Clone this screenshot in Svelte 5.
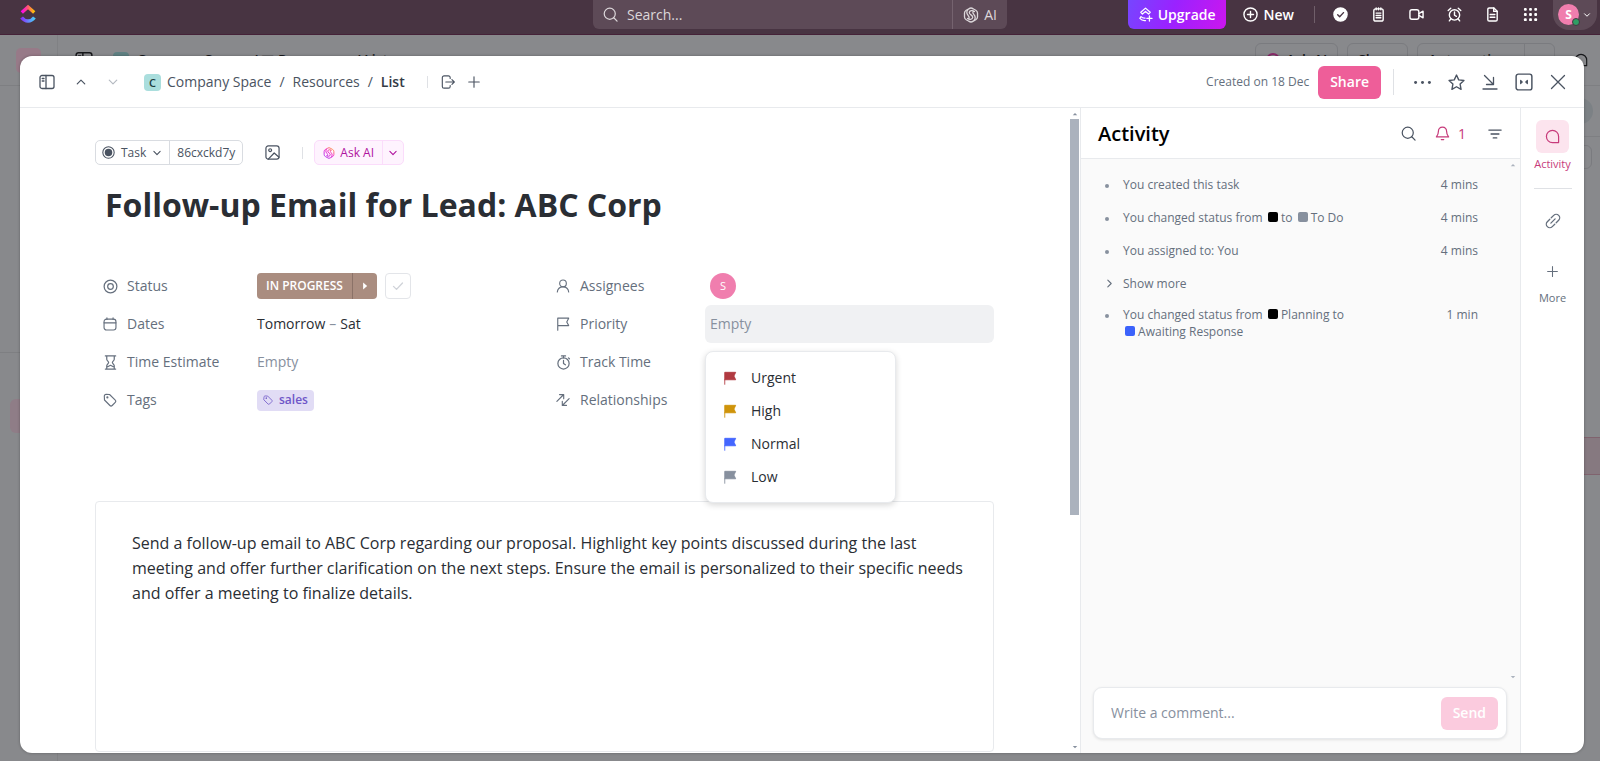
<script>
  // Icon bodies, all drawn on a 16x16 grid
  const icons = {
    search: '<circle cx="7.2" cy="7.2" r="5.9"/><path d="M11.5 11.5 15 15"/>',
    ai: '<path d="M8 1c1 0 1.700.5 2.500 1l2.300 1.300c1.200.7 1.700 1.400 1.700 2.700v4c0 1.300-.5 2-1.700 2.700L10.500 14c-.8.500-1.500 1-2.500 1s-1.700-.5-2.500-1l-2.300-1.300C2 12 1.500 11.300 1.500 10V6c0-1.300.5-2 1.700-2.700L5.500 2C6.300 1.500 7 1 8 1Z"/><path d="M11.500 4.500C9.500 3 6.500 3.600 6.300 5.400 6 7.800 10 8 9.700 10.500 9.400 12.400 6.500 13 4.500 11.500M5 2.500C3.500 4 3.300 6.500 5 8.200c1.200 1.200 1.600 2.300.8 3.600M11 13.500c1.500-1.500 1.700-4 0-5.700-1.200-1.200-1.600-2.300-.8-3.600"/>',
    upgrade: '<path d="M8 1.200 13 5.600 11.300 7.500 8 4.800 4.700 7.500 3 5.600Z"/><path d="M3.200 10.300c1.200 1.200 2.600 1.600 4.300 1.500M3.200 10.300 2 12.200c1.500 1.800 3.600 2.600 6 2.300M12.200 9.500v5.400M9.500 12.200h5.400"/>',
    plusCircle: '<circle cx="8" cy="8" r="7"/><path d="M8 4.800v6.400M4.800 8h6.400"/>',
    checkCircle: '<circle cx="8" cy="8" r="7" fill="currentColor"/><path d="m5 8.300 2.100 2.100L11.200 6" stroke="#483442"/>',
    notepad: '<rect x="3" y="2" width="10" height="13" rx="2"/><path d="M5.500 1v2M8 1v2M10.500 1v2M5.500 6.500h5M5.500 9h5M5.500 11.500h5"/>',
    video: '<rect x="1" y="3" width="9.500" height="10" rx="2.200"/><path d="M10.500 7 15 4.500v7L10.500 9"/>',
    alarm: '<circle cx="8" cy="8.500" r="5.500"/><path d="M8 5.300v3.500l2 1.200M1.300 3.800 4 1.400M14.700 3.800 12 1.400M4 12.800l-1.500 2M12 12.800l1.500 2"/>',
    doc: '<path d="M3 2.500C3 1.600 3.600 1 4.500 1H9.500L13 4.500v9c0 .9-.6 1.500-1.500 1.500h-7C3.600 15 3 14.400 3 13.500Z"/><path d="M9.300 1v3.700H13M5.500 8h5M5.500 11h5"/>',
    grid: '<g fill="currentColor" stroke="none"><rect x="1" y="1" width="3" height="3" rx="1"/><rect x="6.500" y="1" width="3" height="3" rx="1"/><rect x="12" y="1" width="3" height="3" rx="1"/><rect x="1" y="6.500" width="3" height="3" rx="1"/><rect x="6.500" y="6.500" width="3" height="3" rx="1"/><rect x="12" y="6.500" width="3" height="3" rx="1"/><rect x="1" y="12" width="3" height="3" rx="1"/><rect x="6.500" y="12" width="3" height="3" rx="1"/><rect x="12" y="12" width="3" height="3" rx="1"/></g>',
    sidebar: '<rect x="1" y="1.500" width="14" height="13" rx="2"/><path d="M7 1.500v13M3.200 4.500h1.800M3.200 7h1.800"/>',
    up: '<path d="m3 10.500 5-5 5 5"/>',
    down: '<path d="m3 5.500 5 5 5-5"/>',
    right: '<path d="m5 2 6 6-6 6"/>',
    exit: '<path d="M10.500 4V3a2 2 0 0 0-2-2H3.500a2 2 0 0 0-2 2v10a2 2 0 0 0 2 2h5a2 2 0 0 0 2-2v-1M5.500 8H15M12.500 5.300 15.200 8l-2.700 2.700"/>',
    plus: '<path d="M8 2v12M2 8h12"/>',
    dots: '<g fill="currentColor" stroke="none"><circle cx="1.500" cy="8" r="1.400"/><circle cx="8" cy="8" r="1.400"/><circle cx="14.500" cy="8" r="1.400"/></g>',
    star: '<path d="m8 1 2.100 4.500 4.900.6-3.600 3.400.9 4.900L8 12l-4.300 2.400.9-4.900L1 6.100l4.900-.6Z"/>',
    minimize: '<path d="M2.500 1.500l9 9M11.500 3.500v7h-7M1 15h14"/>',
    collapse: '<rect x="1" y="1" width="14" height="14" rx="2"/><path d="m5 6.600 1.400 1.400L5 9.400ZM11 6.600 9.600 8 11 9.400Z" fill="currentColor" stroke-width="1"/>',
    close: '<path d="m1.500 1.500 13 13M14.500 1.500l-13 13"/>',
    taskType: '<circle cx="8" cy="8" r="7"/><circle cx="8" cy="8" r="4.600" fill="currentColor" stroke="none"/>',
    image: '<rect x="1" y="1" width="14" height="14" rx="2.500"/><circle cx="5.500" cy="5.500" r="1.500"/><path d="m3.500 15 6.300-6.500L15 13"/>',
    status: '<circle cx="8" cy="8" r="6.800"/><circle cx="8" cy="8" r="3"/>',
    calendar: '<rect x="1.200" y="2.500" width="13.600" height="12.300" rx="2.800"/><path d="M1.200 6.700h13.600M4.500.8v2M11.500.8v2"/>',
    hourglass: '<path d="M2.500 1h11M2.500 15h11M4 1v3.500C4 6 6 7 6 8s-2 2-2 3.500V15M12 1v3.500C12 6 10 7 10 8s2 2 2 3.500V15M5 12.500 8 11l3 1.500"/>',
    tag: '<path d="M1.500 3.500c0-1 .8-2 2-2l4 .2 6.500 6.500c.8.800.8 1.800 0 2.600L10.500 14.300c-.8.800-1.800.8-2.600 0L1.700 8Z"/><circle cx="5" cy="5" r=".6"/>',
    person: '<circle cx="8" cy="5" r="3.800"/><path d="M1.500 14.800c.4-3.500 3-5.800 6.500-5.800s6.100 2.300 6.500 5.800"/>',
    flag: '<path d="M2 15V1.300h12.500L12.300 5.600l2.200 4.200H2"/>',
    flagFull: '<path d="M2 15.200V1.500h12.500L12.500 5.800l2 4.200H2" fill="currentColor"/>',
    timer: '<circle cx="8" cy="9" r="6"/><path d="M5.800 1h4.400M8 1v2M8 5.800V9l2 1.500M13.300 3l1 1"/>',
    relations: '<path d="M1 9.500 8.500 2M4 1.800h4.800v4.800M15 6.500 7.500 14M12 14.200H7.200V9.400"/>',
    play: '<path d="M5 2.500 11.500 8 5 13.500Z" fill="currentColor" stroke="none"/>',
    check: '<path d="m2 8.500 4 4 8-8.500"/>',
    bell: '<path d="M8 1.200c-2.800 0-4.400 2-4.400 4.600 0 3.200-1.100 4.500-2.100 5.900h13c-1-1.400-2.100-2.700-2.100-5.900 0-2.600-1.600-4.600-4.400-4.600Z"/><path d="M6.700 14.500h2.600"/>',
    filter: '<path d="M1 3.500h14M3.500 8h9M6 12.500h4"/>',
    chat: '<path d="M14.500 14.500V8A6.500 6.500 0 1 0 8 14.500Z"/>',
    link: '<g transform="rotate(-45 8 8)"><path d="M7 4.500H3.500a3.500 3.500 0 0 0 0 7H7M9 4.500h3.500a3.500 3.500 0 0 1 0 7H9M5 8h6"/></g>',
    caretUp: '<path d="M2 11 8 5l6 6Z" fill="currentColor" stroke="none"/>',
    caretDown: '<path d="M2 5l6 6 6-6Z" fill="currentColor" stroke="none"/>'
  };

  const quickActions = [
    ['checkCircle', 'Tasks'],
    ['notepad', 'Notepad'],
    ['video', 'Record clip'],
    ['alarm', 'Reminder'],
    ['doc', 'New doc'],
    ['grid', 'Apps']
  ];

  const priorities = [
    { name: 'Urgent', color: '#b13a41' },
    { name: 'High', color: '#cf940a' },
    { name: 'Normal', color: '#4466ff' },
    { name: 'Low', color: '#87909e' }
  ];

  let priority = null;
  let comment = '';
  let query = '';
</script>

{#snippet icon(name, size = 16, stroke = 1.3)}
  <svg
    width={size}
    height={size}
    viewBox="0 0 16 16"
    fill="none"
    stroke="currentColor"
    stroke-width={stroke}
    stroke-linecap="round"
    stroke-linejoin="round"
    aria-hidden="true">{@html icons[name]}</svg>
{/snippet}

<div class="app">
  <header class="topbar">
    <a class="logo" href="#home" aria-label="Home">
      <svg width="16" height="20" viewBox="0 0 16 20" fill="none" stroke-width="3.400">
        <defs>
          <linearGradient id="logoTop" x1="0" x2="1">
            <stop offset="0" stop-color="#ff02f0" />
            <stop offset="0.500" stop-color="#ff5a6e" />
            <stop offset="1" stop-color="#ffc800" />
          </linearGradient>
          <linearGradient id="logoBottom" x1="0" x2="1">
            <stop offset="0" stop-color="#8930fd" />
            <stop offset="1" stop-color="#49ccf9" />
          </linearGradient>
        </defs>
        <path d="M1.800 8.500 8 3l6.200 5.500" stroke="url(#logoTop)" />
        <path d="M1.600 13.500c3.400 4.600 9.400 4.600 12.800 0" stroke="url(#logoBottom)" />
      </svg>
    </a>

    <div class="search">
      <label class="search-field">
        {@render icon('search', 15)}
        <input type="text" placeholder="Search..." aria-label="Search" bind:value={query} />
      </label>
      <button class="search-ai">{@render icon('ai', 16)}AI</button>
    </div>

    <div class="actions">
      <button class="upgrade">{@render icon('upgrade', 15, 1.4)}Upgrade</button>
      <button class="new">{@render icon('plusCircle', 15, 1.5)}New</button>
      <span class="bar-divider"></span>
      <div class="quick">
        {#each quickActions as [name, label]}
          <button aria-label={label}>{@render icon(name, 15, 1.5)}</button>
        {/each}
      </div>
      <button class="profile" aria-label="Profile">
        <span class="avatar small">S<i class="online"></i></span>
        {@render icon('down', 8, 2)}
      </button>
    </div>
  </header>

  <!-- Page behind the task dialog -->
  <div class="page" aria-hidden="true" inert>
    <div class="page-side">
      <div class="page-workspace"><span></span></div>
      <div class="page-nav"></div>
      <div class="page-pinned"></div>
    </div>
    <div class="page-main">
      <div class="page-head">
        {@render icon('sidebar', 18)}
        <span class="page-badge"></span>
        <span class="page-crumb">Company Space</span>
        <span class="page-crumb">/ &#9638; Resources</span>
        <span class="page-crumb">/ List</span>
        <span class="page-tools">
          <span class="page-btn"><i></i>Ask AI</span>
          <span class="page-btn">Share</span>
          <span class="page-btn wide">Automations<b></b></span>
          {@render icon('chat', 14)}
        </span>
      </div>
      <div class="page-views"><span></span></div>
      <div class="page-filters"><span></span></div>
      <div class="page-band"></div>
    </div>
  </div>

  <div class="modal" role="dialog" aria-label="Task">
    <header class="modal-head">
      <button aria-label="Toggle sidebar">{@render icon('sidebar', 16)}</button>
      <button class="step" aria-label="Previous task">{@render icon('up', 12, 1.6)}</button>
      <button class="step next" aria-label="Next task">{@render icon('down', 12, 1.6)}</button>
      <nav class="crumbs">
        <span class="space-badge">C</span>
        <a href="#space">Company Space</a>
        <span>/</span>
        <a href="#resources">Resources</a>
        <span>/</span>
        <a class="current" href="#list">List</a>
      </nav>
      <span class="divider crumb-divider"></span>
      <button aria-label="Move">{@render icon('exit', 14)}</button>
      <button class="add" aria-label="Add">{@render icon('plus', 14)}</button>

      <div class="head-right">
        <span class="created">Created on 18 Dec</span>
        <button class="share">Share</button>
        <span class="divider tall"></span>
        <div class="window-tools">
          <button aria-label="More">{@render icon('dots', 17)}</button>
          <button aria-label="Favorite">{@render icon('star', 17)}</button>
          <button aria-label="Minimize">{@render icon('minimize', 16)}</button>
          <button aria-label="Collapse">{@render icon('collapse', 18)}</button>
          <button aria-label="Close">{@render icon('close', 16)}</button>
        </div>
      </div>
    </header>

    <div class="modal-body">
      <section class="task">
        <div class="task-content">
          <div class="toolbar">
            <div class="group">
              <button>{@render icon('taskType', 13)}Task{@render icon('down', 10, 1.8)}</button>
              <button>86cxckd7y</button>
            </div>
            <button class="cover" aria-label="Add cover">{@render icon('image', 15)}</button>
            <span class="divider"></span>
            <div class="group ask">
              <button>
                <svg width="12" height="12" viewBox="0 0 16 16" fill="none" stroke="url(#aiFill)" stroke-width="1.200">
                  <defs>
                    <linearGradient id="aiFill" gradientUnits="userSpaceOnUse" x1="2" y1="14" x2="12" y2="2">
                      <stop offset="0" stop-color="#a020f0" />
                      <stop offset="0.600" stop-color="#f01fc4" />
                      <stop offset="1" stop-color="#ff8a3c" />
                    </linearGradient>
                  </defs>
                  {@html icons.ai}
                </svg>
                Ask AI
              </button>
              <button class="ask-more" aria-label="AI options">{@render icon('down', 10, 1.8)}</button>
            </div>
          </div>

          <h1>Follow-up Email for Lead: ABC Corp</h1>

          <div class="fields">
            <div class="field">
              <span class="name">{@render icon('status', 15)}Status</span>
              <div class="value">
                <div class="status">
                  <button>IN PROGRESS</button>
                  <button class="status-next" aria-label="Next status">{@render icon('play', 10)}</button>
                </div>
                <button class="complete" aria-label="Mark complete">{@render icon('check', 12, 1.8)}</button>
              </div>
            </div>
            <div class="field">
              <span class="name">{@render icon('person', 14)}Assignees</span>
              <div class="value"><span class="avatar">S</span></div>
            </div>
            <div class="field">
              <span class="name">{@render icon('calendar', 14)}Dates</span>
              <div class="value dates">Tomorrow <span>–</span> Sat</div>
            </div>
            <div class="field">
              <span class="name">{@render icon('flag', 14)}Priority</span>
              <button class="value active" class:empty={!priority} aria-haspopup="menu" aria-expanded="true">
                {priority ?? 'Empty'}
              </button>
              <div class="menu" role="menu">
                {#each priorities as item}
                  <button role="menuitem" on:click={() => (priority = item.name)}>
                    <span class="flag" style="color: {item.color}">{@render icon('flagFull', 14, 1)}</span>
                    {item.name}
                  </button>
                {/each}
              </div>
            </div>
            <div class="field">
              <span class="name">{@render icon('hourglass', 15)}Time Estimate</span>
              <div class="value empty">Empty</div>
            </div>
            <div class="field">
              <span class="name">{@render icon('timer', 15)}Track Time</span>
              <div class="value"></div>
            </div>
            <div class="field">
              <span class="name">{@render icon('tag', 14)}Tags</span>
              <div class="value"><span class="tag">{@render icon('tag', 10)}sales</span></div>
            </div>
            <div class="field">
              <span class="name">{@render icon('relations', 14)}Relationships</span>
              <div class="value"></div>
            </div>
          </div>

          <div class="description">
            <p>
              Send a follow-up email to ABC Corp regarding our proposal. Highlight key points discussed during the last
              meeting and offer further clarification on the next steps. Ensure the email is personalized to their
              specific needs and offer a meeting to finalize details.
            </p>
          </div>
        </div>

        <div class="scrollbar">
          {@render icon('caretUp', 6)}
          <span class="thumb"></span>
          <span class="caret-end">{@render icon('caretDown', 6)}</span>
        </div>
      </section>

      <aside class="activity">
        <header class="activity-head">
          <h2>Activity</h2>
          <button aria-label="Search activity">{@render icon('search', 15)}</button>
          <button class="bell" aria-label="Watchers">{@render icon('bell', 15)}<span>1</span></button>
          <button aria-label="Filter">{@render icon('filter', 14, 1.5)}</button>
        </header>

        <div class="feed">
          <ul>
            <li><p>You created this task</p><time>4 mins</time></li>
            <li>
              <p>You changed status from <i class="dot"></i> to <i class="dot todo"></i> To Do</p>
              <time>4 mins</time>
            </li>
            <li><p>You assigned to: You</p><time>4 mins</time></li>
            <li class="more">
              <button>{@render icon('right', 9, 2)}Show more</button>
            </li>
            <li>
              <p>
                You changed status from <i class="dot"></i> Planning to
                <i class="dot awaiting"></i> Awaiting Response
              </p>
              <time>1 min</time>
            </li>
          </ul>
          <div class="feed-scroll">
            {@render icon('caretUp', 6)}
            {@render icon('caretDown', 6)}
          </div>
        </div>

        <form class="comment" on:submit|preventDefault>
          <input type="text" placeholder="Write a comment..." aria-label="Write a comment" bind:value={comment} />
          <button class="send" disabled={!comment}>Send</button>
        </form>
      </aside>

      <nav class="rail">
        <button class="rail-active"><span>{@render icon('chat', 15)}</span>Activity</button>
        <hr />
        <button aria-label="Links">{@render icon('link', 16)}</button>
        <button class="rail-more">{@render icon('plus', 13)}More</button>
      </nav>
    </div>
  </div>
</div>

<style>
  :global(body) {
    margin: 0;
  }

  .app {
    position: relative;
    display: flex;
    flex-direction: column;
    height: 100vh;
    overflow: hidden;
    background: #88898c;
    color: #2a2e34;
    font-family: 'Open Sans', 'Noto Sans', sans-serif;
    font-size: 14px;
    line-height: 20px;
  }

  .app * {
    box-sizing: border-box;
  }

  svg {
    display: block;
    flex: none;
  }

  button {
    display: flex;
    align-items: center;
    margin: 0;
    padding: 0;
    border: 0;
    background: none;
    color: inherit;
    font: inherit;
    cursor: pointer;
  }

  input {
    min-width: 0;
    padding: 0;
    border: 0;
    outline: none;
    background: none;
    color: inherit;
    font: inherit;
  }

  a {
    color: inherit;
    text-decoration: none;
  }

  /* Top bar */
  .topbar {
    display: grid;
    grid-template-columns: 1fr minmax(200px, 414px) 1fr;
    align-items: start;
    height: 35px;
    flex: none;
    background: #483442;
    border-bottom: 1px solid #452238;
    color: #fff;
  }

  .logo {
    padding: 4px 20px;
  }

  .search {
    display: flex;
    height: 29px;
    background: #5d4a57;
    border-radius: 0 0 6px 6px;
    color: #dcd7da;
  }

  .search-field {
    display: flex;
    flex: 1;
    align-items: center;
    gap: 9px;
    padding-left: 10px;
  }

  .search-field input {
    flex: 1;
  }

  .search-field input::placeholder {
    color: #dcd7da;
    opacity: 1;
  }

  .search-ai {
    gap: 5px;
    padding: 0 10px;
    border-left: 1px solid #75636f;
  }

  .actions {
    display: flex;
    align-items: center;
    justify-content: flex-end;
    height: 29px;
    padding-right: 3px;
    font-weight: 600;
  }

  .upgrade {
    gap: 5px;
    height: 29px;
    padding: 0 10px;
    border-radius: 0 0 6px 6px;
    background: linear-gradient(110deg, #7646ff, #9a22ff 45%, #cc16ee);
  }

  .new {
    gap: 6px;
    margin-left: 17px;
  }

  .bar-divider {
    width: 1px;
    height: 17px;
    margin: 0 18px 0 20px;
    background: #705f6a;
  }

  .quick {
    display: flex;
    gap: 23px;
  }

  .profile {
    gap: 4px;
    height: 31px;
    margin-left: 15px;
    padding: 0 6px 0 5px;
    border-radius: 0 0 16px 16px;
    background: #5d4a57;
  }

  .avatar {
    display: flex;
    align-items: center;
    justify-content: center;
    width: 26px;
    height: 26px;
    border-radius: 50%;
    background: #f07eae;
    color: #fff;
    font-size: 11px;
  }

  .avatar.small {
    position: relative;
    width: 21px;
    height: 21px;
    font-size: 12px;
    font-weight: 700;
  }

  .online {
    position: absolute;
    right: -1px;
    bottom: -1px;
    width: 8px;
    height: 8px;
    border: 1px solid #483442;
    border-radius: 50%;
    background: #2f9e64;
  }

  /* Dimmed page */
  .page {
    display: flex;
    flex: 1;
    min-height: 0;
    color: #17181b;
  }

  .page-side {
    width: 58px;
    border-right: 1px solid #808184;
  }

  .page-workspace {
    height: 51px;
    padding: 13px 16px;
    border-bottom: 1px solid #7e7f82;
  }

  .page-workspace span {
    display: block;
    width: 25px;
    height: 25px;
    border-radius: 5px;
    background: #977a88;
  }

  .page-nav {
    height: 267px;
    border-bottom: 1px solid #7e7f82;
  }

  .page-pinned {
    width: 34px;
    height: 34px;
    margin: 46px 0 0 10px;
    border-radius: 6px;
    background: #8f7d87;
  }

  .page-main {
    flex: 1;
  }

  .page-head {
    display: flex;
    align-items: center;
    gap: 8px;
    height: 51px;
    padding: 0 12px 0 17px;
    border-bottom: 1px solid #7e7f82;
  }

  .page-badge {
    width: 16px;
    height: 16px;
    margin-left: 12px;
    border-radius: 4px;
    background: #5f8082;
  }

  .page-crumb {
    font-weight: 600;
  }

  .page-tools {
    display: flex;
    align-items: center;
    gap: 9px;
    margin-left: auto;
  }

  .page-btn {
    display: flex;
    align-items: center;
    gap: 6px;
    height: 34px;
    padding: 0 10px;
    border: 1px solid #7a7b7f;
    border-radius: 6px;
    font-weight: 600;
  }

  .page-btn i {
    width: 14px;
    height: 14px;
    border: 2px solid #8a2a6a;
    border-radius: 50%;
  }

  .page-btn.wide {
    width: 138px;
    margin-right: 10px;
  }

  .page-btn b {
    width: 1px;
    height: 32px;
    margin-left: auto;
    margin-right: 19px;
    background: #7a7b7f;
  }

  .page-views,
  .page-filters {
    display: flex;
    align-items: center;
    justify-content: flex-end;
    height: 51px;
    border-bottom: 1px solid #7e7f82;
  }

  .page-views span {
    width: 26px;
    height: 26px;
    margin-right: 7px;
    border-radius: 50%;
    background: #7c8185;
  }

  .page-filters {
    height: 40px;
    border: 0;
  }

  .page-filters span {
    width: 24px;
    height: 24px;
    margin-right: 8px;
    border: 1px solid #7a7b7f;
    border-radius: 6px;
  }

  .page-band {
    height: 38px;
    margin-top: 260px;
    border: 1px solid #80636e;
    border-width: 1px 0;
    background: #867980;
  }

  /* Task dialog */
  .modal {
    position: absolute;
    inset: 56px 16px 8px 20px;
    display: flex;
    flex-direction: column;
    overflow: hidden;
    border-radius: 12px;
    background: #fff;
    box-shadow: 0 0 3px rgba(0, 0, 0, 0.3);
  }

  .modal-head {
    display: flex;
    align-items: center;
    height: 52px;
    flex: none;
    padding: 1px 18px 0 19px;
    border-bottom: 1px solid #e8eaed;
    color: #4a5361;
  }

  .step {
    margin-left: 20px;
  }

  .step.next {
    color: #b5bac2;
  }

  .crumbs {
    display: flex;
    align-items: center;
    gap: 8px;
    margin-left: 25px;
  }

  .space-badge {
    width: 17px;
    height: 17px;
    margin-right: -2px;
    border-radius: 4px;
    background: #aadedd;
    color: #1c3d3d;
    font-size: 11px;
    font-weight: 600;
    line-height: 17px;
    text-align: center;
  }

  .crumbs .current {
    color: #343b46;
    font-weight: 600;
  }

  .divider {
    width: 1px;
    height: 12px;
    background: #dfe1e5;
  }

  .crumb-divider {
    margin: 0 13px 0 22px;
  }

  .divider.tall {
    height: 26px;
    margin: 0 20px 0 12px;
  }

  .add {
    margin-left: 12px;
  }

  .head-right {
    display: flex;
    align-items: center;
    margin-left: auto;
  }

  .created {
    margin-right: 9px;
    color: #656f7d;
    font-size: 12px;
  }

  .share,
  .send {
    height: 33px;
    padding: 0 12px;
    border-radius: 6px;
    background: #ee5e99;
    color: #fff;
    font-weight: 600;
  }

  .window-tools {
    display: flex;
    align-items: center;
    gap: 17px;
  }

  .modal-body {
    display: flex;
    flex: 1;
    min-height: 0;
  }

  .task {
    display: flex;
    flex: 1;
    min-width: 0;
  }

  .task-content {
    display: flex;
    flex: 1;
    flex-direction: column;
    min-width: 0;
    padding: 32px 75px 1px;
  }

  .toolbar {
    display: flex;
    align-items: center;
    font-size: 12px;
    color: #4a5361;
  }

  .group {
    display: flex;
    height: 25px;
    border: 1px solid #d9dce1;
    border-radius: 5px;
  }

  .group button {
    gap: 6px;
    padding: 0 7px 0 6px;
    font-weight: 500;
  }

  .group button + button {
    padding: 0 7px;
    border-left: 1px solid #d9dce1;
  }

  .cover {
    margin: 0 22px;
  }

  .group.ask {
    margin-left: 11px;
    border-color: #fbdcfb;
    background: #fef3fe;
    color: #b0149f;
  }

  .group.ask button {
    padding: 0 8px;
    gap: 5px;
  }

  .group.ask .ask-more {
    padding: 0 5px;
    border-color: #fbdcfb;
  }

  h1 {
    margin: 17px 0 39px;
    padding-left: 10px;
    font-size: 32px;
    font-weight: 700;
    line-height: 46px;
  }

  .fields {
    display: grid;
    grid-template-columns: 1fr 1fr;
    grid-auto-rows: 38px;
    column-gap: 7px;
  }

  .field {
    position: relative;
    display: grid;
    grid-template-columns: 157px 1fr;
    align-items: center;
  }

  .name {
    display: grid;
    grid-template-columns: 16px 1fr;
    align-items: center;
    gap: 8px;
    padding-left: 8px;
    color: #656f7d;
  }

  .value {
    display: flex;
    align-items: center;
    gap: 8px;
    height: 100%;
    padding: 0 5px;
  }

  .dates {
    gap: 4px;
  }

  .dates span,
  .value.empty {
    color: #87909e;
  }

  .value.active {
    border-radius: 6px;
    background: #f0f1f3;
  }

  .status {
    display: flex;
    height: 26px;
    border-radius: 4px;
    background: #aa8d80;
    color: #fff;
    font-size: 12px;
    font-weight: 600;
  }

  .status button {
    padding: 0 9px;
  }

  .status .status-next {
    padding: 0 7px;
    border-left: 1px solid #8b7268;
  }

  .complete {
    justify-content: center;
    width: 26px;
    height: 26px;
    border: 1px solid #e3e5e9;
    border-radius: 4px;
    color: #d0d3d9;
  }

  .tag {
    display: flex;
    align-items: center;
    gap: 6px;
    height: 21px;
    padding: 0 6px;
    border-radius: 4px;
    background: #e1dcf5;
    color: #6e56c8;
    font-size: 12px;
    font-weight: 600;
  }

  .menu {
    position: absolute;
    top: 46px;
    left: 157px;
    z-index: 2;
    width: 191px;
    padding: 9px 8px;
    border: 1px solid #e8eaed;
    border-radius: 8px;
    background: #fff;
    box-shadow: 0 2px 6px rgba(0, 0, 0, 0.16);
  }

  .menu button {
    gap: 14px;
    width: 100%;
    height: 33px;
    padding-left: 9px;
  }

  .description {
    flex: 1;
    margin-top: 82px;
    padding: 29px 24px 29px 36px;
    border: 1px solid #e8eaed;
    border-radius: 4px;
    font-size: 16px;
    line-height: 25px;
  }

  .description p {
    margin: 0;
  }

  .scrollbar {
    display: flex;
    flex-direction: column;
    align-items: center;
    width: 11px;
    padding: 3px 0;
    color: #87909e;
  }

  .thumb {
    width: 9px;
    height: 62%;
    margin-top: 2px;
    background: #abb2bd;
  }

  .caret-end {
    margin-top: auto;
  }

  /* Activity panel */
  .activity {
    display: flex;
    flex-direction: column;
    width: 440px;
    flex: none;
    border-left: 1px solid #e8eaed;
    background: #fafafa;
  }

  .activity-head {
    display: flex;
    align-items: center;
    height: 51px;
    flex: none;
    padding: 1px 18px 0 17px;
    border-bottom: 1px solid #e8eaed;
    background: #fff;
    color: #4a5361;
  }

  h2 {
    margin: 0 auto 0 0;
    color: #000;
    font-size: 20px;
    font-weight: 600;
    line-height: 28px;
  }

  .bell {
    gap: 8px;
    margin: 0 22px 0 19px;
    color: #c73b7b;
  }

  .feed {
    display: flex;
    flex: 1;
    min-height: 0;
    color: #656f7d;
    font-size: 12px;
    line-height: 17px;
  }

  ul {
    flex: 1;
    margin: 0;
    padding: 17px 32px 0 24px;
    list-style: none;
  }

  li {
    display: flex;
    gap: 14px;
    margin-bottom: 16px;
  }

  li::before {
    content: '';
    flex: none;
    width: 4px;
    height: 4px;
    margin-top: 8px;
    border-radius: 50%;
    background: #87909e;
  }

  li.more {
    margin-bottom: 14px;
  }

  li.more::before {
    display: none;
  }

  li.more button {
    gap: 9px;
  }

  li p {
    width: 228px;
    margin: 0;
  }

  time {
    margin-left: auto;
  }

  .dot {
    display: inline-block;
    width: 10px;
    height: 10px;
    margin-left: 2px;
    border-radius: 2px;
    background: #000;
  }

  .dot.todo {
    background: #87909e;
  }

  .dot.awaiting {
    background: #3b62fb;
  }

  .feed-scroll {
    display: flex;
    flex-direction: column;
    justify-content: space-between;
    width: 10px;
    padding: 3px 0;
    color: #abb2bd;
  }

  .comment {
    display: flex;
    align-items: center;
    height: 52px;
    flex: none;
    margin: 4px 13px 14px 12px;
    padding: 0 8px 0 17px;
    border: 1px solid #e8eaed;
    border-radius: 9px;
    background: #fff;
    box-shadow: 0 1px 3px rgba(0, 0, 0, 0.1);
  }

  .comment input {
    flex: 1;
  }

  .comment input::placeholder {
    color: #87909e;
    opacity: 1;
  }

  .send:disabled {
    background: #fbcbde;
  }

  .rail {
    display: flex;
    flex-direction: column;
    align-items: center;
    width: 64px;
    flex: none;
    padding-top: 12px;
    border-left: 1px solid #e8eaed;
    color: #656f7d;
    font-size: 11px;
    line-height: 16px;
  }

  .rail-active {
    flex-direction: column;
    gap: 3px;
    color: #c73b7b;
  }

  .rail-active span {
    padding: 9px;
    border-radius: 6px;
    background: #fce4ee;
  }

  hr {
    width: 38px;
    height: 1px;
    margin: 16px 0 24px;
    border: 0;
    background: #dfe1e5;
  }

  .rail-more {
    flex-direction: column;
    gap: 12px;
    margin-top: 36px;
  }
</style>
